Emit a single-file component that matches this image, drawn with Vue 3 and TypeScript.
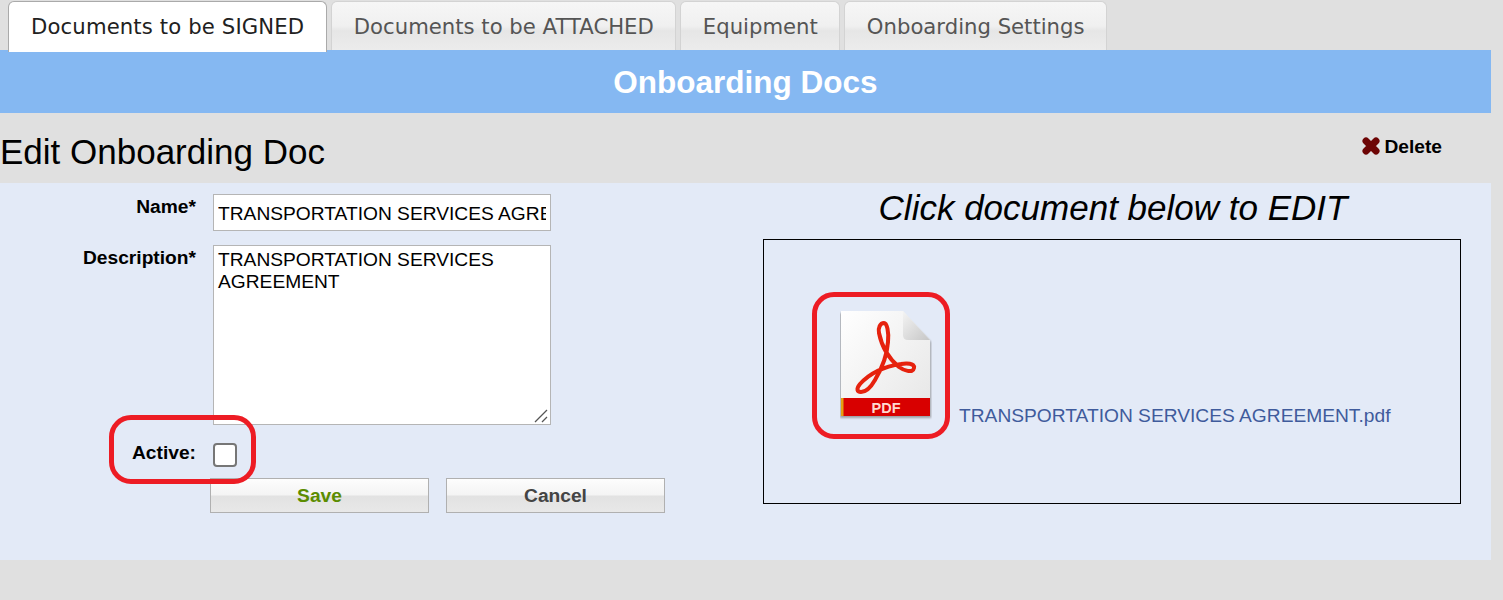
<template>
  <div class="page">
    <nav class="tabs">
      <div v-for="(tab, i) in tabs" :key="tab" class="tab" :class="{ active: i === 0 }">{{ tab }}</div>
    </nav>
    <div class="band">Onboarding Docs</div>
    <div class="heading-row">
      <h1>Edit Onboarding Doc</h1>
      <a class="delete">
        <svg class="x-icon" width="18" height="18" viewBox="0 0 18 18">
          <path d="M4 4 14 14M14 4 4 14" fill="none" stroke="#6d0505" stroke-width="7" stroke-linecap="round" />
        </svg>
        <span>Delete</span>
      </a>
    </div>
    <div class="panel">
      <form class="edit-form">
        <label class="lbl">Name*</label>
        <input v-model="name" class="txt" type="text" />
        <label class="lbl">Description*</label>
        <div class="area-cell">
          <textarea v-model="description" class="txt area"></textarea>
          <svg class="grip" width="14" height="14" viewBox="0 0 14 14">
            <path d="M1 13 13 1M8 13l5-5" fill="none" stroke="#555" stroke-width="1.300" />
          </svg>
        </div>
        <label class="lbl active-lbl">Active:</label>
        <div class="check-cell">
          <input class="check" type="checkbox" />
          <span class="ring ring-active"></span>
        </div>
        <div class="actions">
          <button type="button" class="btn save">Save</button>
          <button type="button" class="btn cancel">Cancel</button>
        </div>
      </form>
      <section class="doc-side">
        <div class="doc-title">Click document below to EDIT</div>
        <div class="doc-box">
          <div class="pdf-wrap">
            <svg class="pdf" width="92" height="110" viewBox="0 0 92 110">
              <defs>
                <linearGradient id="sheet" x1="0" y1="0" x2="1" y2="1">
                  <stop offset="0" stop-color="#ffffff" />
                  <stop offset="1" stop-color="#e6e6e6" />
                </linearGradient>
                <linearGradient id="fold" x1="0" y1="0" x2="1" y2="1">
                  <stop offset="0" stop-color="#f4f4f4" />
                  <stop offset="1" stop-color="#c6c6c6" />
                </linearGradient>
                <filter id="soft" x="-10%" y="-10%" width="120%" height="120%">
                  <feGaussianBlur stdDeviation="1.300" />
                </filter>
                <filter id="tiny" x="-5%" y="-5%" width="110%" height="110%">
                  <feGaussianBlur stdDeviation="0.600" />
                </filter>
              </defs>
              <path d="M0 3h62l29 29v76H0z" fill="#777" opacity=".65" filter="url(#soft)" />
              <path d="M1 1h62l27 29v75H1z" fill="url(#sheet)" />
              <path d="M63 1 90 30 H68q-5 0-5-5z" fill="url(#fold)" />
              <path
                d="M44 13c-4 0-6 5-5 10 2 10 8 24 20 34 4 3 14 7 15 1 1-5-8-5-13-4-14 2-30 8-41 20-4 5-3 8 1 8 5 0 10-5 14-12 6-10 12-24 13-38 1-10-1-19-4-19z"
                fill="none" stroke="#e6200f" stroke-width="4" filter="url(#tiny)"
              />
              <rect x="1" y="88" width="89" height="18" fill="#d80000" />
              <rect x="1" y="88" width="2.500" height="18" fill="#e5a010" />
              <text x="46" y="103" text-anchor="middle" class="pdf-label">PDF</text>
            </svg>
            <span class="ring ring-pdf"></span>
          </div>
          <a class="doc-link">TRANSPORTATION SERVICES AGREEMENT.pdf</a>
        </div>
      </section>
    </div>
  </div>
</template>

<script setup lang="ts">
import { ref } from 'vue'

const tabs: string[] = [
  'Documents to be SIGNED',
  'Documents to be ATTACHED',
  'Equipment',
  'Onboarding Settings',
]

const name = ref('TRANSPORTATION SERVICES AGREEMENT')
const description = ref('TRANSPORTATION SERVICES AGREEMENT')
</script>

<style>
html,
body {
  background: #e0e0e0;
}
</style>

<style scoped>
.page {
  height: 600px;
  overflow: hidden;
  background: #e0e0e0;
  font-family: 'Liberation Sans', Arial, sans-serif;
  color: #000;
}

.tabs {
  display: flex;
  gap: 4px;
  height: 50px;
  padding: 1px 0 0 8px;
  box-sizing: border-box;
}

.tab {
  height: 49px;
  padding: 0 21.5px;
  box-sizing: border-box;
  border: 1px solid #d3d3d3;
  border-bottom: none;
  border-radius: 6px 6px 0 0;
  background: linear-gradient(#f6f6f6 0%, #f0f0f0 50%, #e6e6e6 60%, #ececec 100%);
  font-family: 'DejaVu Sans', Verdana, sans-serif;
  font-size: 21.2px;
  line-height: 50px;
  color: #555;
  white-space: nowrap;
}

.tab.active {
  position: relative;
  z-index: 1;
  height: 51px;
  padding: 0 22px;
  background: #fff;
  border-color: #aaa;
  color: #212121;
  letter-spacing: 0.13px;
}

.band {
  width: 1491px;
  height: 63px;
  background: #85b8f2;
  color: #fff;
  font-size: 31.5px;
  font-weight: 700;
  line-height: 65px;
  text-align: center;
}

.heading-row {
  display: flex;
  justify-content: space-between;
  height: 70px;
  padding: 0 61px 0 0;
}

h1 {
  margin: 19px 0 0;
  font-size: 35px;
  font-weight: 400;
  line-height: 40px;
}

.delete {
  display: flex;
  align-items: center;
  gap: 4px;
  height: 22px;
  margin-top: 23px;
  font-size: 19.2px;
  font-weight: 700;
}

.x-icon {
  margin-top: -2px;
}

.panel {
  display: flex;
  width: 1491px;
  height: 377px;
  background: #e3eaf7;
}

.edit-form {
  display: grid;
  grid-template-columns: 196px 338px;
  grid-template-rows: 37px 180px 24px;
  column-gap: 17px;
  row-gap: 14px;
  align-content: start;
  width: 763px;
  padding-top: 11px;
  box-sizing: border-box;
}

.lbl {
  text-align: right;
  font-size: 19.2px;
  font-weight: 700;
  line-height: 26px;
}

.active-lbl {
  line-height: 28px;
}

.txt {
  box-sizing: border-box;
  width: 338px;
  margin: 0;
  padding: 3px 4px 1px;
  border: 1px solid #b5b5b5;
  border-radius: 0;
  background: #fff;
  font-family: 'Liberation Sans', Arial, sans-serif;
  font-size: 19.2px;
  line-height: 22px;
  color: #000;
  outline: none;
}

.area-cell {
  position: relative;
  height: 180px;
}

.area {
  display: block;
  height: 180px;
  padding-top: 3px;
  resize: none;
  overflow: hidden;
}

.grip {
  position: absolute;
  right: 3px;
  bottom: 2px;
}

.check-cell {
  position: relative;
  margin-top: 4px;
}

.check {
  display: block;
  appearance: none;
  width: 24px;
  height: 24px;
  margin: 0;
  border: 2px solid #767676;
  border-radius: 4px;
  background: #fff;
}

.actions {
  grid-column: 2;
  display: flex;
  gap: 17px;
  margin: 1px 0 0 -3px;
  width: 455px;
}

.btn {
  width: 219px;
  height: 35px;
  padding: 1px 0 0;
  border: 1px solid #b0b0b0;
  background: linear-gradient(#fdfdfd 0%, #f4f4f4 48%, #e2e2e2 52%, #e8e8e8 100%);
  font-family: 'Liberation Sans', Arial, sans-serif;
  font-size: 19.2px;
  font-weight: 700;
}

.save {
  color: #5b8c00;
}

.cancel {
  color: #444;
}

.doc-side {
  width: 698px;
}

.doc-title {
  height: 56px;
  padding: 5px 0 0 2px;
  box-sizing: border-box;
  text-align: center;
  font-size: 35px;
  font-style: italic;
  line-height: 40px;
  white-space: nowrap;
}

.doc-box {
  display: flex;
  align-items: flex-end;
  height: 265px;
  box-sizing: border-box;
  border: 1px solid #000;
  padding: 70px 0 0 76px;
}

.pdf-wrap {
  position: relative;
  width: 92px;
  height: 110px;
  margin-bottom: auto;
  flex: none;
}

.pdf {
  display: block;
}

.pdf-label {
  font-family: 'Liberation Sans', Arial, sans-serif;
  font-size: 14.5px;
  font-weight: 700;
  fill: #ffd9d0;
}

.doc-link {
  margin: 0 0 76px 27px;
  font-size: 19.2px;
  line-height: 22px;
  color: #3f5b9c;
  white-space: nowrap;
}

.ring {
  position: absolute;
  box-sizing: border-box;
  border: 5px solid #ed1c24;
  border-radius: 22px;
  pointer-events: none;
}

.ring-active {
  left: -104px;
  top: -28px;
  width: 147px;
  height: 69px;
}

.ring-pdf {
  left: -28px;
  top: -18px;
  width: 138px;
  height: 147px;
}
</style>
